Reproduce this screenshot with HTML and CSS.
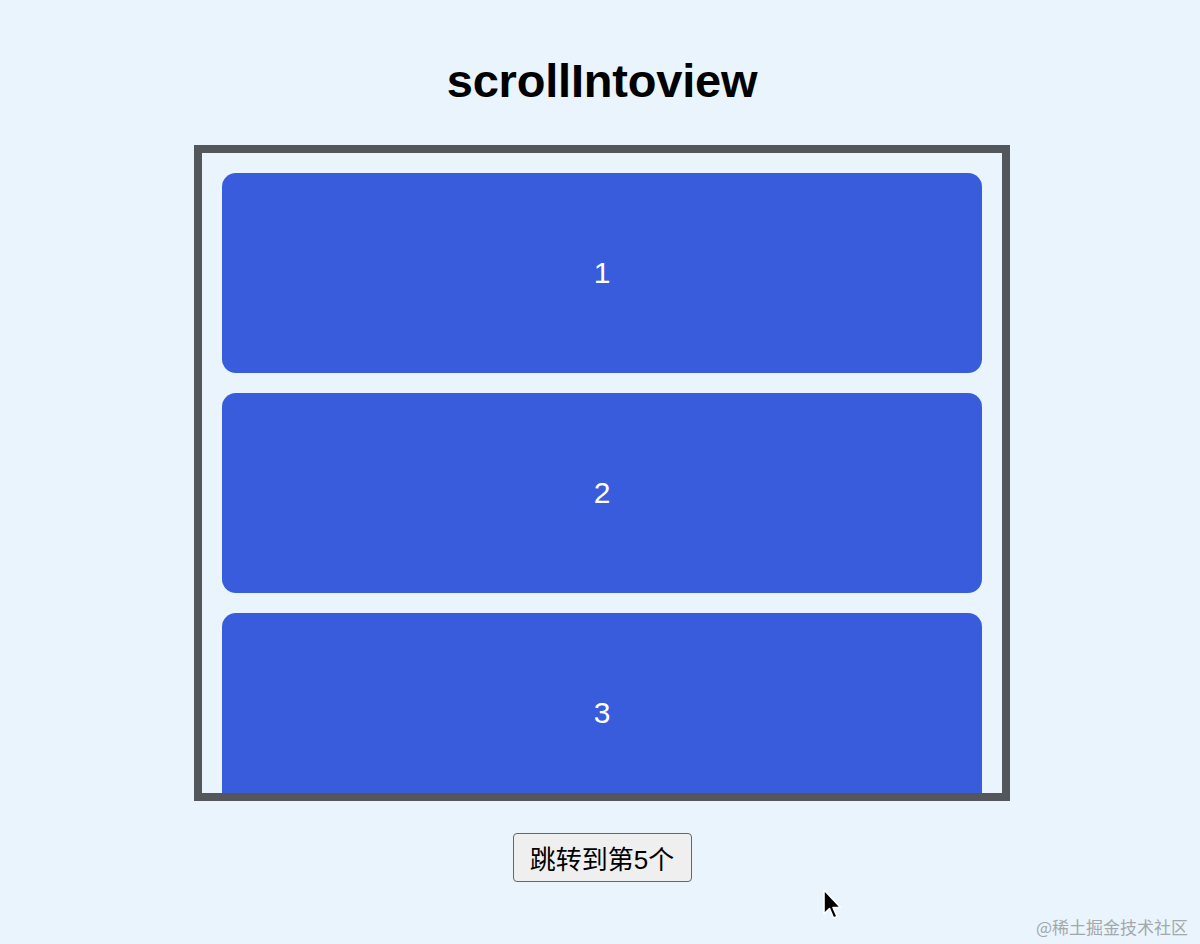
FILE: index.html
```html
<!DOCTYPE html>
<html lang="zh">
<head>
<meta charset="utf-8">
<title>scrollIntoview</title>
<link rel="stylesheet" href="styles.css">
</head>
<body>
<div class="page">
  <h1 class="title">scrollIntoview</h1>
  <div class="scroller">
    <div class="list">
      <div class="card">1</div>
      <div class="card">2</div>
      <div class="card">3</div>
      <div class="card">4</div>
      <div class="card">5</div>
    </div>
  </div>
  <button class="jump">跳转到第5个</button>
</div>
<svg class="cursor" width="22" height="34" viewBox="0 0 22 34">
  <path d="M2 2 L2 26 L7.5 20.5 L11.5 30 L15 28.5 L11 19.5 L18.5 19.5 Z" fill="#000" stroke="#fff" stroke-width="1.6" stroke-linejoin="round"/>
</svg>
<div class="watermark">@稀土掘金技术社区</div>
</body>
</html>
```
FILE: styles.css
```css
html, body {
  margin: 0;
  padding: 0;
}
html {
  background: #eaf4fc;
}
body {
  background: #eaf4fc;
  min-height: 944px;
  position: relative;
  font-family: "Liberation Sans", Arial, "Noto Sans CJK SC", sans-serif;
}
.page {
  display: flex;
  flex-direction: column;
  align-items: center;
  padding-left: 4px;
}
.title {
  margin: 53px 0 36px;
  font-size: 47px;
  line-height: 56px;
  font-weight: 700;
  color: #000;
  letter-spacing: -0.2px;
}
.scroller {
  box-sizing: border-box;
  width: 816px;
  height: 656px;
  border: 8px solid #53575c;
  padding: 20px;
  overflow: hidden;
}
.list {
  display: flex;
  flex-direction: column;
  gap: 20px;
}
.card {
  height: 200px;
  border-radius: 14px;
  background: #385cdb;
  color: #fff;
  font-size: 30px;
  display: flex;
  align-items: center;
  justify-content: center;
}
.jump {
  margin-top: 32px;
  box-sizing: border-box;
  height: 49px;
  width: 179px;
  padding: 0;
  font-family: "Liberation Sans", Arial, "Noto Sans CJK SC", sans-serif;
  font-size: 26px;
  color: #000;
  background: #efefef;
  border: 1.5px solid #666;
  border-radius: 4px;
}
.cursor {
  position: absolute;
  left: 822px;
  top: 888px;
}
.watermark {
  position: absolute;
  right: 12px;
  bottom: 5px;
  line-height: 24px;
  font-family: "Noto Sans CJK SC", sans-serif;
  font-size: 17px;
  color: #a3a8ad;
}
```
